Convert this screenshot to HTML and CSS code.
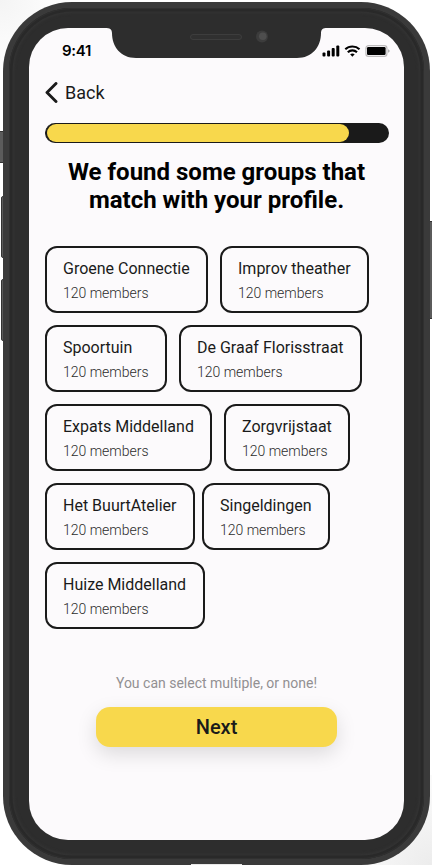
FILE: index.html
```html
<!DOCTYPE html>
<html lang="en">
<head>
<meta charset="utf-8">
<title>Groups</title>
<link rel="stylesheet" href="styles.css">
</head>
<body>
<div class="stage">
  <span class="key key-mute"></span>
  <span class="key key-up"></span>
  <span class="key key-down"></span>
  <span class="key key-power"></span>
  <div class="phone">
    <div class="bezel">
      <div class="screen">
        <svg class="notch" width="222" height="31" viewBox="0 0 222 31" aria-hidden="true">
          <path d="M0 0H222V1C218 1 216.200 2 216 6C216 20 207 31 192 31H31C16 31 7 20 7 6C6.800 2 5 1 0 1Z" fill="#2d2d2d"/>
          <rect x="85.500" y="7.500" width="51" height="5" rx="2.500" fill="#303030" stroke="#414141" stroke-width=".8"/>
          <circle cx="157" cy="9.500" r="6" fill="#3c3c3c"/>
          <circle cx="157.800" cy="9.200" r="3.800" fill="#4e4e4e"/>
        </svg>
        <header class="status">
          <span class="time">9:41</span>
          <svg class="signals" width="68" height="14" viewBox="0 0 68 14" aria-hidden="true">
            <g fill="#000">
              <rect x="0.500" y="8.500" width="3" height="4" rx="1"/>
              <rect x="5.100" y="6.500" width="3" height="6" rx="1"/>
              <rect x="9.700" y="4" width="3" height="8.500" rx="1"/>
              <rect x="14.300" y="1.500" width="3" height="11" rx="1"/>
            </g>
            <g fill="none" stroke="#000" stroke-width="2.100">
              <path d="M23.300 5.300C27.200 1.600 33.600 1.600 37.500 5.300"/>
              <path d="M25.800 8.200C28.400 5.700 32.400 5.700 35 8.200"/>
            </g>
            <path d="M28.100 10.300Q30.400 8.500 32.700 10.300L30.400 12.700Z"/>
            <rect x="43.900" y="1.700" width="21" height="10.600" rx="2.600" fill="none" stroke="#bdbbbc" stroke-width="1.200"/>
            <rect x="45" y="3" width="18.600" height="8" rx="1.200"/>
            <path d="M66.100 5.200Q67.600 6 67.600 7T66.100 8.800Z" fill="#aaa"/>
          </svg>
        </header>
        <main class="content">
          <a class="back">
            <svg width="13" height="21" viewBox="0 0 13 21" aria-hidden="true"><path d="M11 1.500L2 10.500L11 19.500" fill="none" stroke="#1a1a1a" stroke-width="2.900" stroke-linecap="round" stroke-linejoin="round"/></svg>
            <span>Back</span>
          </a>
          <div class="progress"><div class="progress-fill"></div></div>
          <h1>We found some groups that<br>match with your profile.</h1>
          <div class="groups">
            <div class="row">
              <div class="group w163"><b>Groene Connectie</b><small>120 members</small></div>
              <div class="group w149"><b>Improv theather</b><small>120 members</small></div>
            </div>
            <div class="row">
              <div class="group w122"><b>Spoortuin</b><small>120 members</small></div>
              <div class="group w183"><b>De Graaf Florisstraat</b><small>120 members</small></div>
            </div>
            <div class="row">
              <div class="group w167"><b>Expats Middelland</b><small>120 members</small></div>
              <div class="group w126"><b>Zorgvrijstaat</b><small>120 members</small></div>
            </div>
            <div class="row tight">
              <div class="group w150"><b>Het BuurtAtelier</b><small>120 members</small></div>
              <div class="group w128"><b>Singeldingen</b><small>120 members</small></div>
            </div>
            <div class="row">
              <div class="group w160"><b>Huize Middelland</b><small>120 members</small></div>
            </div>
          </div>
          <p class="hint">You can select multiple, or none!</p>
          <button class="next">Next</button>
        </main>
      </div>
    </div>
  </div>
  <span class="port"></span>
</div>
</body>
</html>
```
FILE: styles.css
```css
* { box-sizing: border-box; }
body { margin: 0; background: #fff; font-family: Roboto, "Liberation Sans", sans-serif; color: #1a1a1a; }
.stage {
  position: relative; width: 432px; height: 865px; overflow: hidden; padding: 2px 2px 0 3px;
  background:
    radial-gradient(circle at 0 0, #f4f4f4 0, #fff 70px) 0 0 / 90px 90px no-repeat,
    radial-gradient(circle at 100% 100%, #ececec 0, #fafafa 80px) 100% 100% / 90px 90px no-repeat,
    #fff;
}
.phone {
  position: relative; width: 427px; height: 863px; padding: 6px;
  border-radius: 69px; background: #3a3a3a;
}
.bezel {
  height: 851px; padding: 20px;
  border-radius: 63px; background: #2d2d2d;
  box-shadow: inset 0 0 0 1px #303030, inset 0 0 0 3.500px #292929, inset 0 0 3px 5px #343434;
}
.screen {
  position: relative; width: 375px; height: 812px; overflow: hidden;
  border-radius: 39px; background: #fcfafc;
}
.key { position: absolute; background: #5b5b5b; border: 1px solid #333; border-radius: 2px; }
.key-mute { left: -3px; top: 131px; width: 8px; height: 32px; }
.key-up { left: 1px; top: 196px; width: 5px; height: 62px; }
.key-down { left: 1px; top: 279px; width: 5px; height: 62px; }
.key-power { left: 428px; top: 221px; width: 6px; height: 98px; }
.port { position: absolute; left: 191px; top: 864px; width: 51px; height: 1px; background: #e8e8e8; }
.notch { position: absolute; left: 76px; top: -1px; }
.status { display: flex; justify-content: space-between; height: 45px; padding: 14px 14px 0 33px; }
.time { font: 600 15px/18px Inter, sans-serif; color: #000; letter-spacing: -.3px; }
.signals { margin-top: 2px; }
.content { padding: 0 16px; }
.back { display: flex; align-items: center; gap: 7px; height: 38px; font-size: 18px; }
.progress {
  width: 344px; height: 20px; margin-top: 12px; padding: 1px;
  border: 0 solid #1a1a1a; border-left-width: 1px; border-radius: 10px; background: #1a1a1a;
}
.progress-fill { width: 302px; height: 18px; border-radius: 9px; background: #f8d84c; }
h1 { margin: 15px 0 0; font-size: 24px; line-height: 28px; font-weight: 700; text-align: center; color: #000; }
.groups { display: flex; flex-direction: column; gap: 12px; margin-top: 32px; }
.row { display: flex; gap: 12px; }
.row.tight { gap: 7px; }
.group {
  display: flex; flex-direction: column; flex: none; height: 67px; padding: 11px 0 0 16px;
  border: 2px solid #1a1a1a; border-radius: 12px; white-space: nowrap;
}
.group b { font-weight: 400; font-size: 16px; line-height: 20px; }
.group small { margin-top: 5px; font-weight: 300; font-size: 14px; line-height: 18px; color: #2c2c2c; }
.w163 { width: 163px; }
.w149 { width: 149px; }
.w122 { width: 122px; }
.w183 { width: 183px; }
.w167 { width: 167px; }
.w126 { width: 126px; }
.w150 { width: 150px; }
.w128 { width: 128px; }
.w160 { width: 160px; }
.hint { margin: 45px 0 0; font-size: 14px; line-height: 18px; text-align: center; color: #929092; }
.next {
  display: block; width: 241px; height: 40px; margin: 15px auto 0; padding: 0; border: 0;
  border-radius: 14px; background: #f8d84c; box-shadow: 0 7px 20px rgba(0, 0, 0, .13);
  font: 500 20px/40px Roboto, sans-serif; color: #1a1a1a;
}
```
